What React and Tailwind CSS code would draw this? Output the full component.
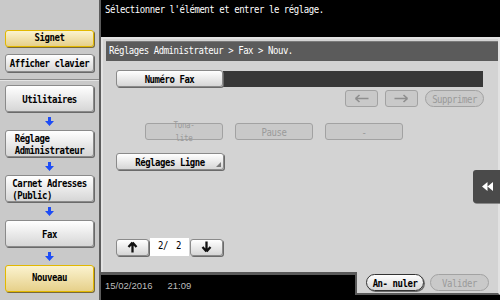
import clsx from "clsx";

const T = ({ children, className }) => (
  <span className={clsx("inline-block scale-y-[1.22]", className)}>{children}</span>
);

const Btn = ({ className, children, disabled, pill }) => (
  <div
    className={clsx(
      "relative flex shrink-0 items-center justify-center border leading-[10px]",
      pill ? "rounded-full" : "rounded-[3px]",
      disabled
        ? "border-[#a2a2a2] bg-[#c9c9c9] text-[#9a9a9a]"
        : "border-[#8a8a8a] bg-linear-to-b from-white to-[#d6d6d6] font-bold text-black shadow-[1px_1px_0_#6a6a6a]",
      className
    )}
  >
    {children}
  </div>
);

const Gold = ({ className, children }) => (
  <div
    className={clsx(
      "flex shrink-0 items-center justify-center rounded-[3px] border-[1.5px] border-[#e2b800] bg-linear-to-b from-[#fbf3cf] to-[#e6d08a] font-bold text-black shadow-[1px_1px_0_#7a6a3a]",
      className
    )}
  >
    {children}
  </div>
);

const BlueArrow = () => (
  <div className="flex h-[18px] w-[89px] shrink-0 items-center justify-center">
    <svg width="9" height="9" viewBox="0 0 9 9">
      <path d="M3 0h3v4h3L4.5 9 0 4h3z" fill="#1d4cf5" />
    </svg>
  </div>
);

const ThinArrow = ({ right }) => (
  <svg width="15" height="9" viewBox="0 0 15 9" className={right ? "rotate-180" : ""}>
    <path d="M1.5 4.5h13M1.5 4.5l4-3.5M1.5 4.5l4 3.5" stroke="#8e8e8e" strokeWidth="1.6" fill="none" />
  </svg>
);

const BoldArrow = ({ down }) => (
  <svg width="11" height="12" viewBox="0 0 11 12" className={down ? "rotate-180" : ""}>
    <path d="M5.5 1.5v10M5.5 1.5L1.5 6M5.5 1.5l4 4.5" stroke="#111" strokeWidth="2.3" fill="none" />
  </svg>
);

export default function App() {
  return (
    <div className="flex h-[300px] w-[500px] overflow-hidden bg-black font-['DejaVu_Sans_Mono',monospace] text-[9px] tracking-[-0.45px]">
      {/* Sidebar */}
      <aside className="flex h-[300px] w-[101px] shrink-0 flex-col border-r-2 border-[#5c5c5c] bg-[#c9c9c9]">
        <div className="flex h-[79px] shrink-0 flex-col gap-[7px] pl-[5px] pt-[30px]">
          <Gold className="h-[17px] w-[89px]"><T>Signet</T></Gold>
          <Btn className="h-[18px] w-[89px]"><T>Afficher clavier</T></Btn>
        </div>
        <div className="h-px shrink-0 bg-[#8a8a8a]" />
        <div className="h-px shrink-0 bg-[#e4e4e4]" />
        <div className="flex shrink-0 flex-col pl-[5px] pt-[4px]">
          <Btn className="h-[27px] w-[89px]"><T>Utilitaires</T></Btn>
          <BlueArrow />
          <Btn className="h-[27px] w-[89px]">
            <T className="text-left">Réglage<br />Administrateur</T>
          </Btn>
          <BlueArrow />
          <Btn className="h-[27px] w-[89px]">
            <T className="text-left">Carnet Adresses<br />(Public)</T>
          </Btn>
          <BlueArrow />
          <Btn className="h-[27px] w-[89px]"><T>Fax</T></Btn>
          <BlueArrow />
          <Gold className="h-[27px] w-[89px]"><T>Nouveau</T></Gold>
        </div>
      </aside>

      {/* Main */}
      <main className="relative flex min-w-0 flex-1 flex-col">
        <div className="h-[37px] shrink-0 pl-[4px] pt-[3px] leading-[12px] text-white">
          <T>Sélectionner l'élément et entrer le réglage.</T>
        </div>

        <section className="flex h-[235px] shrink-0 flex-col border-l-2 border-r-2 border-t-2 border-[#e2e2e2] bg-[#d3d3d3]">
          <div className="ml-[3px] mt-[2px] flex h-[20px] items-center border-t border-[#7a7a7a] bg-[#5b5b5b] pl-[3px] text-white">
            <T>Réglages Administrateur &gt; Fax &gt; Nouv.</T>
          </div>

          <div className="flex flex-col pl-[13px]">
            <div className="mt-[9px] flex items-start">
              <Btn className="h-[17px] w-[107px]"><T>Numéro Fax</T></Btn>
              <div className="mt-px h-[16px] w-[260px] bg-[#383838]" />
            </div>

            <div className="mt-[3px] flex w-[368px] justify-end gap-[7px]">
              <Btn disabled className="h-[17px] w-[33px]"><ThinArrow /></Btn>
              <Btn disabled className="h-[17px] w-[33px]"><ThinArrow right /></Btn>
              <Btn disabled pill className="h-[17px] w-[59px]"><T>Supprimer</T></Btn>
            </div>

            <div className="ml-[29px] mt-[16px] flex gap-[12px]">
              <Btn disabled className="h-[17px] w-[78px] text-[7.5px] leading-[6px] tracking-[-0.3px] text-[#8f8f8f]">
                <T className="text-center">Tona-<br />lite</T>
              </Btn>
              <Btn disabled className="h-[17px] w-[78px]"><T>Pause</T></Btn>
              <Btn disabled className="h-[17px] w-[78px]"><T>-</T></Btn>
            </div>

            <div className="mt-[13px] flex">
              <Btn className="h-[17px] w-[108px]">
                <T>Réglages Ligne</T>
                <svg width="5" height="5" viewBox="0 0 5 5" className="absolute bottom-[2px] right-[2px]">
                  <path d="M5 0v5H0z" fill="#7a7a7a" />
                </svg>
              </Btn>
            </div>

            <div className="mt-[68px] flex items-center">
              <Btn className="h-[17px] w-[33px]"><BoldArrow /></Btn>
              <div className="mx-px flex h-[18px] w-[39px] items-center justify-center gap-[8px] bg-white text-black">
                <T>2/</T><T>2</T>
              </div>
              <Btn className="h-[17px] w-[33px]"><BoldArrow down /></Btn>
            </div>
          </div>
        </section>

        <div className="flex h-[28px] shrink-0">
          <div className="flex w-[254px] items-start gap-[15px] border-t-[3px] border-[#5a5a5a] pl-[4px] pt-[4px] font-['Liberation_Sans',sans-serif] text-[9.5px] tracking-normal text-[#bdbdbd]">
            <span>15/02/2016</span>
            <span>21:09</span>
          </div>
          <div className="flex h-[23px] flex-1 items-start gap-[6px] border-b-2 border-l-2 border-r-2 border-b-[#5a5a5a] border-l-[#5a5a5a] border-r-[#e2e2e2] bg-[#d3d3d3] pl-[9px] pt-[2px]">
            <Btn pill className="h-[17px] w-[58px] border-[#333]"><T>An- nuler</T></Btn>
            <Btn disabled pill className="h-[17px] w-[59px]"><T>Valider</T></Btn>
          </div>
        </div>

        <div className="absolute left-[372px] top-[170px] flex h-[33px] w-[28px] items-center justify-center rounded-l-[3px] bg-[#4a4a4a] shadow-[1px_1px_0_#888]">
          <svg width="11" height="9" viewBox="0 0 11 9">
            <path d="M0 4.5L5.5 0v9zM5.5 4.5L11 0v9z" fill="#fff" />
          </svg>
        </div>
      </main>
    </div>
  );
}
